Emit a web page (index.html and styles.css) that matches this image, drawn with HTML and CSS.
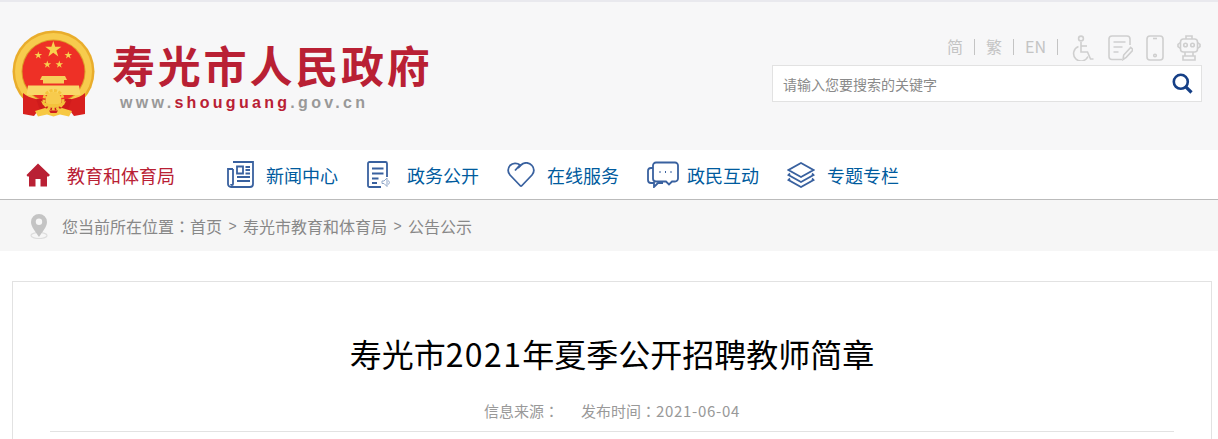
FILE: index.html
```html
<!DOCTYPE html>
<html lang="zh-CN">
<head>
    <meta charset="UTF-8">
    <meta name="viewport" content="width=device-width, initial-scale=1.0">
    <title>寿光市2021年夏季公开招聘教师简章</title>
    <link rel="stylesheet" href="styles.css">
</head>
<body>
    <svg class="defs" width="0" height="0">
        <defs>
            <polygon id="star" points="0,-1 .225,-.309 .951,-.309 .363,.118 .588,.809 0,.382 -.588,.809 -.363,.118 -.951,-.309 -.225,-.309"/>
        </defs>
    </svg>

    <header class="header">
        <div class="logo">
            <!-- emblem -->
            <svg class="emblem" width="84" height="88" viewBox="0 0 84 88">
                <circle cx="41.5" cy="41.5" r="41" fill="#e9ad2c"/>
                <circle cx="41.5" cy="41.5" r="38.500" fill="#f7cb4d"/>
                <circle cx="41.5" cy="41.5" r="32" fill="#dd9c28"/>
                <circle cx="41.5" cy="41.5" r="31" fill="#ee3026"/>
                <g fill="#f8d24e">
                    <use href="#star" transform="translate(41.3 19.5) scale(8.5)"/>
                    <use href="#star" transform="translate(26.3 25.3) scale(4)"/>
                    <use href="#star" transform="translate(56.3 25.3) scale(4)"/>
                    <use href="#star" transform="translate(35.3 34.5) scale(4)"/>
                    <use href="#star" transform="translate(47.3 34.5) scale(4)"/>
                </g>
                <path d="M30 46h23l2 4h-3v3.500h-21v-3.500h-3z" fill="#f6cf5a"/>
                <path d="M16 55.500h51l1.500 9.500h-54z" fill="#f9d768"/>
                <path d="M11 63c3 3 8 5 13 6l8 9-7 4-3 4-11-2z" fill="#d8201e"/>
                <path d="M73 63c-3 3-8 5-13 6l-8 9 7 4 3 4 11-2z" fill="#d8201e"/>
                <path d="M24 69h36l-5 14h-26z" fill="#cf1b1c"/>
                <circle cx="41.500" cy="70" r="9.500" fill="none" stroke="#f4c23c" stroke-width="3" stroke-dasharray="3 1.500"/>
                <circle cx="41.500" cy="70" r="8" fill="#f7cb4d"/>
                <path d="M29 71l8 3h9l8-3-2 4-6 2h-9l-6-2z" fill="#f4c23c"/>
                <path d="M23 81l10-3 8.500 3 8.500-3 10 3-3 5.500-9-2-6.500 2-6.500-2-9 2z" fill="#f7c843"/>
                <path d="M37 80.500h9l-1.500 2.500h-6z" fill="#cf1b1c"/>
            </svg>
            <div class="logo-text">
                <div class="site-name">寿光市人民政府</div>
                <div class="site-url">www.<b>shouguang</b>.gov.cn</div>
            </div>
        </div>

        <div class="tools">
            <div class="tool-links">
                <a>简</a><i></i><a>繁</a><i></i><a>EN</a><i></i>
                <!-- accessibility -->
                <svg class="tool-icon first" width="23" height="26" viewBox="0 0 23 26">
                    <circle cx="9" cy="3.5" r="2.4"/>
                    <path d="M9 7v10h6.500l3 7h3"/>
                    <path d="M9 11h6"/>
                    <path d="M6.500 11.500a7.500 7.500 0 1 0 9.500 10"/>
                </svg>
                <!-- notes -->
                <svg class="tool-icon" width="25" height="26" viewBox="0 0 25 26">
                    <path d="M14 24.500h-10a3 3 0 0 1-3-3v-17.500a3 3 0 0 1 3-3h15a3 3 0 0 1 3 3v6"/>
                    <path d="M5.500 7h12M5.500 12h9M5.500 17h5"/>
                    <path d="M15 24.500l.7-4.500 7-7.500 2.500 2.300-7 7.500z"/>
                </svg>
                <!-- phone -->
                <svg class="tool-icon" width="18" height="26" viewBox="0 0 18 26">
                    <rect x="1" y="1" width="16" height="24" rx="3"/>
                    <path d="M7 3.500h4"/>
                    <circle cx="9" cy="20.500" r="1.300"/>
                </svg>
                <!-- robot -->
                <svg class="tool-icon" width="24" height="26" viewBox="0 0 24 26">
                    <path d="M9 4v-3h6v3"/>
                    <rect x="3.500" y="4" width="17" height="13" rx="3"/>
                    <circle cx="8.500" cy="10" r="1.800"/>
                    <circle cx="15.500" cy="10" r="1.800"/>
                    <path d="M3.500 7.500l-2.500 2v2l2.500 2M20.500 7.500l2.500 2v2l-2.500 2"/>
                    <path d="M8 17v4h8v-4M6 25v-4h12v4z"/>
                </svg>
            </div>
            <div class="search">
                <span class="search-hint">请输入您要搜索的关键字</span>
                <svg width="21" height="21" viewBox="0 0 21 21" fill="none" stroke="#153f86" stroke-width="2.600">
                    <circle cx="8.800" cy="8.800" r="7"/>
                    <path d="M13.800 13.800l5.700 5.700" stroke-width="3.200"/>
                </svg>
            </div>
        </div>
    </header>

    <nav class="nav">
        <a class="nav-item home">
            <span class="nav-icon">
                <svg width="24" height="24" viewBox="0 0 24 24">
                    <path d="M12 0.500l12 11.500-1.500 1.500h-1.500v10h-6.500v-7.500h-5v7.500h-6.500v-10h-1.500l-1-1.500z"/>
                </svg>
            </span>
            教育和体育局
        </a>
        <a class="nav-item news">
            <span class="nav-icon">
                <svg width="27" height="27" viewBox="0 0 27 27">
                    <path d="M6 1h20v22a3 3 0 0 1-3 3h-19a3 3 0 0 1-3-3v-15h5"/>
                    <path d="M6 8v15a1 1 0 0 1-2 0"/>
                    <path d="M10 5.500h6v7h-6zM18.500 6h4.500M18.500 9h4.500M18.500 12.500h4.500M10 16h13M10 20h13"/>
                </svg>
            </span>
            新闻中心
        </a>
        <a class="nav-item">
            <span class="nav-icon">
                <svg width="24" height="27" viewBox="0 0 24 27">
                    <path d="M14 26h-11.500a1.500 1.500 0 0 1-1.500-1.500v-22a1.500 1.500 0 0 1 1.500-1.500h16a1.500 1.500 0 0 1 1.500 1.500v13.500"/>
                    <path d="M5 7.500h11.500M5 12.500h11.500M5 17.500h6.500M5 22h5"/>
                    <path class="speaker" d="M15 20h2l3-3v8.500l-3-3h-2z"/>
                    <path class="speaker" d="M21.500 19.500a3 3 0 0 1 0 4"/>
                </svg>
            </span>
            政务公开
        </a>
        <a class="nav-item">
            <span class="nav-icon">
                <svg width="28" height="26" viewBox="0 0 28 26">
                    <path d="M14 24.500l-11-11.500a7 7 0 0 1 0-9.500 7.500 7.500 0 0 1 10 -.5l-5 5.500"/>
                    <path d="M14 24.500l11-11.500a7 7 0 0 0 0-9.500 7.500 7.500 0 0 0-11-.5l-3 3"/>
                </svg>
            </span>
            在线服务
        </a>
        <a class="nav-item">
            <span class="nav-icon">
                <svg width="32" height="27" viewBox="0 0 32 27">
                    <path d="M9 1.500h19a3 3 0 0 1 3 3v13a3 3 0 0 1-3 3h-3l-3 3-3-3h-10a3 3 0 0 1-3-3v-13a3 3 0 0 1 3-3z"/>
                    <path d="M6 7h-2a3 3 0 0 0-3 3v9a3 3 0 0 0 3 3h3v4l4-4h5"/>
                    <path d="M12.500 11h1M18 11h1M23.500 11h1" stroke-width="2"/>
                </svg>
            </span>
            政民互动
        </a>
        <a class="nav-item">
            <span class="nav-icon">
                <svg width="28" height="26" viewBox="0 0 28 26">
                    <path d="M14 1l12.500 7-12.500 7-12.500-7z"/>
                    <path d="M3 11.500l-1.500 1.500 12.500 7 12.500-7-1.500-1.500"/>
                    <path d="M3 16.500l-1.500 1.500 12.500 7 12.500-7-1.500-1.500"/>
                </svg>
            </span>
            专题专栏
        </a>
    </nav>

    <div class="crumb">
        <svg class="pin" width="18" height="26" viewBox="0 0 18 26">
            <ellipse cx="9" cy="22.500" rx="8" ry="3" fill="none" stroke="#ddd" stroke-width="1.200"/>
            <path d="M9 1a8 8 0 0 1 8 8c0 5-5 10-8 15-3-5-8-10-8-15a8 8 0 0 1 8-8z" fill="#c4c4c4"/>
            <circle cx="9" cy="8.800" r="3.200" fill="#f6f6f6"/>
        </svg>
        <span>您当前所在位置<span class="colon" lang="zh-TW">：</span>首页</span>
        <span class="sep">&gt;</span>
        <span>寿光市教育和体育局</span>
        <span class="sep">&gt;</span>
        <span>公告公示</span>
    </div>

    <main class="card">
        <h1 class="title">寿光市<span class="num">2021</span>年夏季公开招聘教师简章</h1>
        <div class="meta">
            <span>信息来源<span class="colon" lang="zh-TW">：</span></span>
            <span>发布时间<span class="colon" lang="zh-TW">：</span><span class="date">2021-06-04</span></span>
        </div>
    </main>
</body>
</html>
```

FILE: styles.css
```css
html, body {
    height: 100%;
    overflow: hidden;
}
body {
    margin: 0;
    background: #fff;
    font-family: "Noto Sans CJK SC", "Liberation Sans", sans-serif;
    color: #333;
}
.defs {
    display: block;
}
.colon {
    font-family: "Noto Sans CJK TC", sans-serif;
}

/* header */
.header {
    height: 148px;
    border-top: 2px solid #e9e9ee;
    background: #f7f7f8;
    display: flex;
    justify-content: space-between;
}
.logo {
    display: flex;
    padding: 28px 0 0 12px;
}
.emblem {
    display: block;
}
.logo-text {
    margin-left: 17px;
    padding-top: 9px;
}
.site-name {
    margin-left: -1px;
    font-size: 43px;
    line-height: 50px;
    font-weight: 700;
    letter-spacing: 2.8px;
    color: #b92034;
}
.site-url {
    margin: 5px 0 0 7px;
    font-family: "Liberation Sans", sans-serif;
    font-size: 16px;
    line-height: 18px;
    font-weight: 700;
    letter-spacing: 3.3px;
    color: #999;
}
.site-url b {
    color: #b92034;
}
.tools {
    width: 430px;
    margin-right: 16px;
    padding-top: 30px;
}
.tool-links {
    height: 33px;
    display: flex;
    align-items: flex-start;
    justify-content: flex-end;
    padding-right: 1px;
    font-size: 16px;
    line-height: 28px;
    color: #c4c4c4;
}
.tool-links i {
    width: 1px;
    height: 16px;
    margin: 7px 11px 0;
    background: #c4c4c4;
}
.tool-icon {
    margin: 3px 0 0 13px;
    fill: none;
    stroke: #cfcfcf;
    stroke-width: 1.6;
}
.tool-icon.first {
    margin-left: 3px;
}
.search {
    height: 35px;
    border: 1px solid #e2e2e2;
    background: #fff;
    display: flex;
    align-items: center;
    justify-content: space-between;
    padding: 0 8px 0 10px;
}
.search-hint {
    font-size: 14px;
    color: #8a8a8a;
}

/* nav */
.nav {
    height: 49px;
    border-bottom: 1px solid #bbb;
    display: flex;
    padding-left: 26px;
}
.nav-item {
    width: 140px;
    display: flex;
    align-items: center;
    font-size: 18px;
    color: #005b9e;
    white-space: nowrap;
}
.nav-item.home {
    width: 201px;
    color: #b92034;
}
.nav-icon {
    flex: none;
    width: 40px;
    display: flex;
    align-items: center;
}
.news .nav-icon {
    width: 39px;
}
.home .nav-icon {
    width: 41px;
}
.nav-icon svg {
    fill: none;
    stroke: #39619f;
    stroke-width: 1.8;
}
.nav-icon .speaker {
    stroke: #8fa6c8;
    stroke-width: 1;
}
.home .nav-icon svg {
    fill: #b92034;
    stroke: none;
}

/* breadcrumb */
.crumb {
    height: 51px;
    background: #f6f6f6;
    display: flex;
    align-items: center;
    padding-left: 30px;
    font-size: 16px;
    color: #888;
}
.pin {
    margin-right: 14px;
}
.sep {
    width: 21px;
    text-align: center;
    font-family: "Liberation Sans", sans-serif;
    font-size: 14px;
}

/* article */
.card {
    margin: 30px 6px 0 12px;
    height: 400px;
    border: 1px solid #e2e2e2;
    padding: 0 37px;
}
.title {
    margin: 0;
    padding-top: 47px;
    font-size: 32px;
    line-height: 48px;
    font-weight: 400;
    text-align: center;
    color: #000;
}
.num {
    letter-spacing: 1.4px;
}
.meta {
    height: 43px;
    margin-top: 11px;
    border-bottom: 1px solid #e2e2e2;
    display: flex;
    justify-content: center;
    gap: 22px;
    font-size: 15px;
    line-height: 46px;
    color: #999;
}
.date {
    letter-spacing: .7px;
}
```
